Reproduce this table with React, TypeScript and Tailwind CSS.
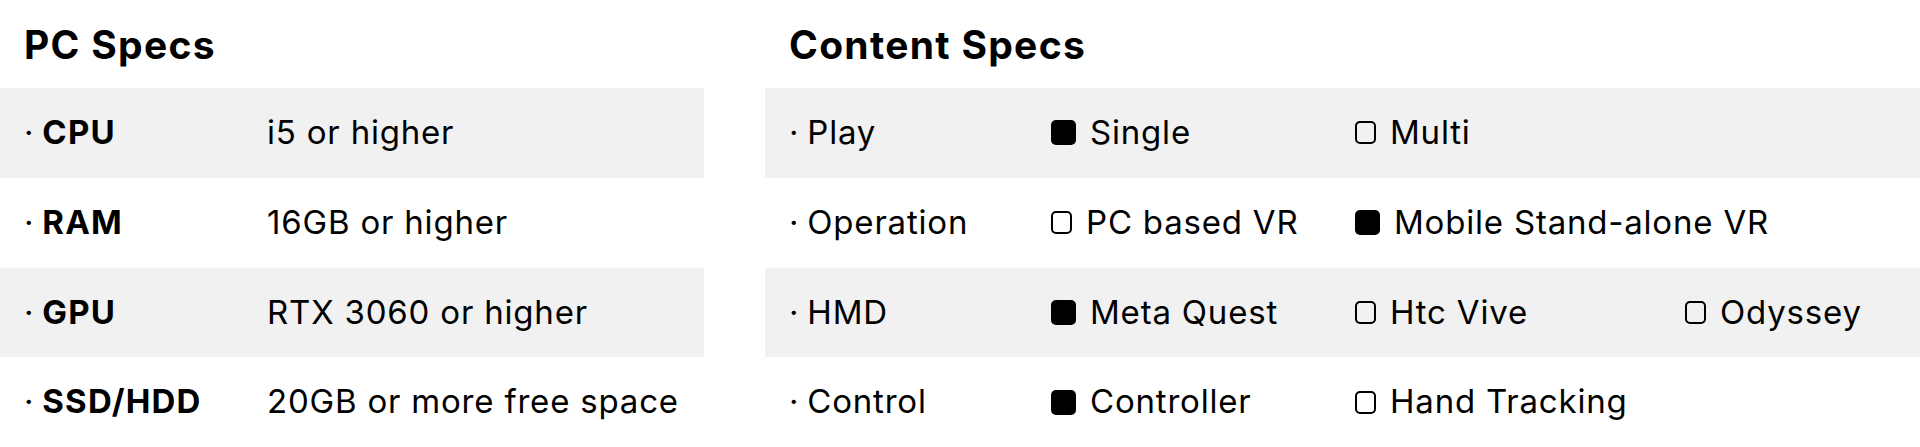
import React from 'react';

type Option = { label: string; checked: boolean };

const pcSpecs = [
  { name: 'CPU', value: 'i5 or higher' },
  { name: 'RAM', value: '16GB or higher' },
  { name: 'GPU', value: 'RTX 3060 or higher' },
  { name: 'SSD/HDD', value: '20GB or more free space' },
];

const contentSpecs: { name: string; options: Option[] }[] = [
  {
    name: 'Play',
    options: [
      { label: 'Single', checked: true },
      { label: 'Multi', checked: false },
    ],
  },
  {
    name: 'Operation',
    options: [
      { label: 'PC based VR', checked: false },
      { label: 'Mobile Stand-alone VR', checked: true },
    ],
  },
  {
    name: 'HMD',
    options: [
      { label: 'Meta Quest', checked: true },
      { label: 'Htc Vive', checked: false },
      { label: 'Odyssey', checked: false },
    ],
  },
  {
    name: 'Control',
    options: [
      { label: 'Controller', checked: true },
      { label: 'Hand Tracking', checked: false },
    ],
  },
];

// option columns start at fixed offsets in the reference
const optionWidths = ['w-[304px]', 'w-[330px]', 'w-auto'];

const CheckMark: React.FC<{ checked: boolean }> = ({ checked }) =>
  checked ? (
    <span className="inline-block w-[25px] h-[25px] rounded-[5px] bg-black shrink-0" />
  ) : (
    <span className="inline-block w-[21px] h-[23px] rounded-[5px] border-2 border-black shrink-0" />
  );

export default function App() {
  return (
    <div
      className="w-[1920px] h-[447px] bg-white text-black flex gap-[61px] overflow-hidden"
      style={{ fontFamily: 'Inter, "Noto Sans", sans-serif' }}
    >
      {/* PC specs */}
      <div className="w-[704px] shrink-0">
        <div className="h-[88px] flex items-center pl-6">
          <h2 className="text-[39px] font-bold leading-none tracking-[1.3px]">PC Specs</h2>
        </div>
        {pcSpecs.map((row, i) => (
          <div
            key={row.name}
            className={`h-[89.75px] flex items-center pl-6 text-[33px] tracking-[0.8px] whitespace-nowrap ${i % 2 === 0 ? 'bg-[#f1f1f1]' : ''}`}
          >
            <div className="w-[243px] flex items-center">
              <span className="mr-[8px]">·</span>
              <span className="font-bold tracking-[1.2px]">{row.name}</span>
            </div>
            <span>{row.value}</span>
          </div>
        ))}
      </div>

      {/* Content specs */}
      <div className="flex-1">
        <div className="h-[88px] flex items-center pl-6">
          <h2 className="text-[39px] font-bold leading-none tracking-[1.3px]">Content Specs</h2>
        </div>
        {contentSpecs.map((row, i) => (
          <div
            key={row.name}
            className={`h-[89.75px] flex items-center pl-6 text-[33px] tracking-[0.8px] whitespace-nowrap ${i % 2 === 0 ? 'bg-[#f1f1f1]' : ''}`}
          >
            <div className="w-[262px] flex items-center">
              <span className="mr-[8px]">·</span>
              <span>{row.name}</span>
            </div>
            {row.options.map((opt, j) => (
              <div key={opt.label} className={`${optionWidths[j]} flex items-center gap-[14px]`}>
                <CheckMark checked={opt.checked} />
                <span>{opt.label}</span>
              </div>
            ))}
          </div>
        ))}
      </div>
    </div>
  );
}
